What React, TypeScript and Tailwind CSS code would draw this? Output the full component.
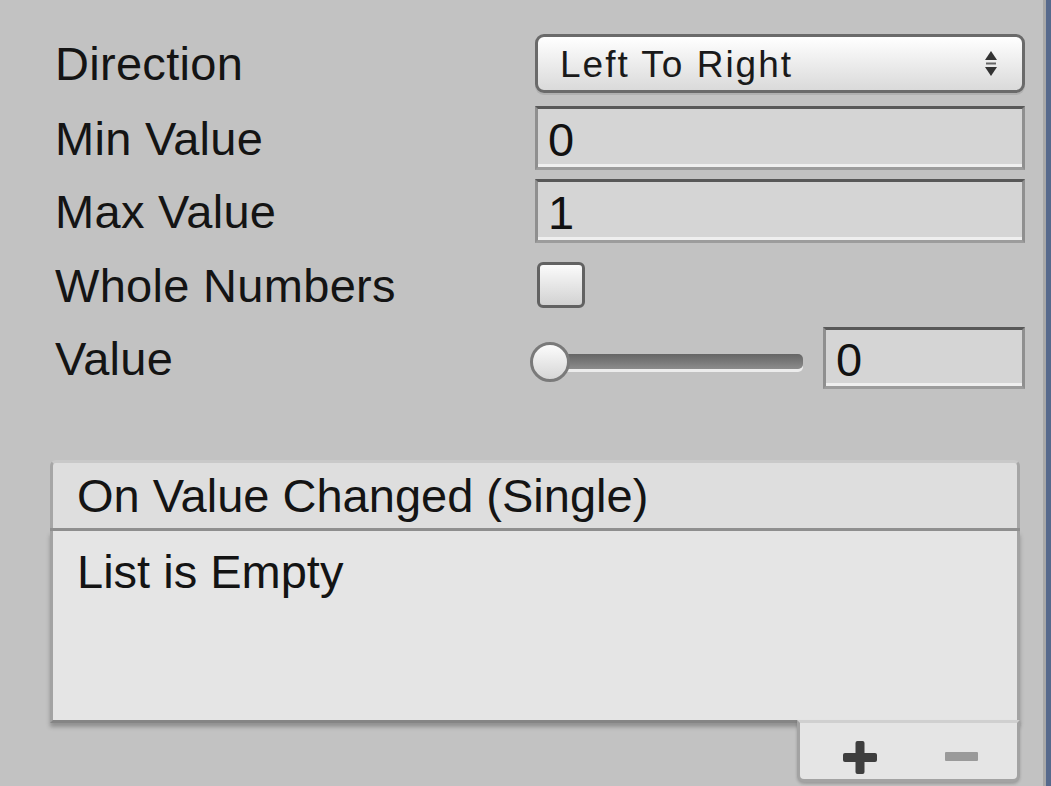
import React from "react";

const font = { fontFamily: '"Liberation Sans", Arial, sans-serif' };

function Field({ value, className = "" }: { value: string; className?: string }) {
  return (
    <div
      className={`h-full flex items-center bg-[#d5d5d5] border-t-[3px] border-t-[#585858] border-x-[3px] border-x-[#8f8f8f] border-b-[3px] border-b-[#9c9c9c] shadow-[inset_0_-3px_0_#efefef] pl-[10px] text-[47px] text-[#111] leading-none ${className}`}
    >
      <span className="mt-[2px]">{value}</span>
    </div>
  );
}

function Label({ children }: { children: React.ReactNode }) {
  return (
    <div className="w-[485px] shrink-0 pl-[5px] text-[47px] leading-none text-[#141414] tracking-[0.3px]">{children}</div>
  );
}

export default function App() {
  return (
    <div className="w-[1051px] h-[786px] bg-[#c2c2c2] flex overflow-hidden" style={font}>
      <div className="flex-1 flex flex-col pl-[50px] pr-[18px] pt-[34px]">
        {/* Direction */}
        <div className="h-[59px] flex items-center">
          <Label>Direction</Label>
          <div className="flex-1 h-full rounded-[9px] border-[3px] border-[#6a6a6a] bg-gradient-to-b from-[#ffffff] to-[#dadada] flex items-center pl-[22px] pr-[24px] shadow-[0_2px_0_#b0b0b0]">
            <span className="flex-1 text-[37px] tracking-[2px] text-[#1a1a1a] leading-none mt-[1px]">Left To Right</span>
            <svg width="14" height="28" viewBox="0 0 14 28">
              <polygon points="7,1 13,10 1,10" fill="#333" />
              <rect x="2" y="12.5" width="10" height="2" fill="#666" />
              <polygon points="1,17 13,17 7,26" fill="#333" />
            </svg>
          </div>
        </div>
        {/* Min */}
        <div className="h-[64px] mt-[13px] flex items-center">
          <Label>Min Value</Label>
          <Field value="0" className="flex-1" />
        </div>
        {/* Max */}
        <div className="h-[64px] mt-[9px] flex items-center">
          <Label>Max Value</Label>
          <Field value="1" className="flex-1" />
        </div>
        {/* Whole numbers */}
        <div className="h-[64px] mt-[10px] flex items-center">
          <Label>Whole Numbers</Label>
          <div className="ml-[2px] w-[48px] h-[46px] rounded-[6px] border-[3px] border-[#626262] bg-gradient-to-b from-[#fbfbfb] to-[#d2d2d2]" />
        </div>
        {/* Value */}
        <div className="h-[62px] mt-[10px] flex items-center">
          <Label>Value</Label>
          <div className="relative w-[273px] shrink-0 h-full ml-[-5px] flex items-center">
            <div className="absolute left-[18px] right-0 top-[27px] h-[15px] rounded-r-[5px] bg-gradient-to-b from-[#656565] to-[#8c8c8c] shadow-[0_3px_0_#ececec]" />
            <div className="absolute left-0 top-[15px] w-[40px] h-[40px] rounded-full border-[3px] border-[#7a7a7a] bg-gradient-to-b from-[#fcfcfc] to-[#d6d6d6]" />
          </div>
          <div className="w-[20px] shrink-0" />
          <Field value="0" className="w-[202px]" />
        </div>
        {/* Event box */}
        <div className="mt-[71px] mr-[5px] flex flex-col">
          <div className="h-[68px] bg-[#dedede] border-[3px] border-b-0 border-[#a6a6a6] border-t-[#c9c9c9] rounded-t-[6px] flex items-center pl-[24px] text-[47px] text-[#141414] leading-none">
            <span>On Value Changed (Single)</span>
          </div>
          <div className="h-[3px] bg-[#8f8f8f]" />
          <div className="h-[192px] bg-[#e5e5e5] border-x-[3px] border-[#a3a3a3] border-b-[3px] border-b-[#858585] shadow-[0_4px_4px_rgba(0,0,0,0.25)] pl-[24px] pt-[17px] text-[47px] text-[#141414] leading-none">
            List is Empty
          </div>
          <div className="flex justify-end">
            <div className="w-[223px] h-[62px] bg-[#e5e5e5] border-x-[3px] border-b-[3px] border-[#a3a3a3] rounded-b-[7px] mt-[-3px] border-t-[3px] border-t-[#d0d0d0] shadow-[0_2px_3px_rgba(0,0,0,0.2)] flex items-center pt-[12px]">
              <svg className="ml-[43px]" width="34" height="33" viewBox="0 0 34 33">
                <rect x="0" y="12" width="34" height="9" rx="2" fill="#3e3e3e" />
                <rect x="12.5" y="0" width="9" height="33" rx="2" fill="#3e3e3e" />
              </svg>
              <svg className="ml-[68px]" width="33" height="10" viewBox="0 0 33 10">
                <rect x="0" y="0" width="33" height="9" rx="1" fill="#9a9a9a" />
              </svg>
            </div>
          </div>
        </div>
      </div>
      <div className="w-[3px] bg-[#a8a8a8]" />
      <div className="w-[5px] bg-[#56698c]" />
    </div>
  );
}
